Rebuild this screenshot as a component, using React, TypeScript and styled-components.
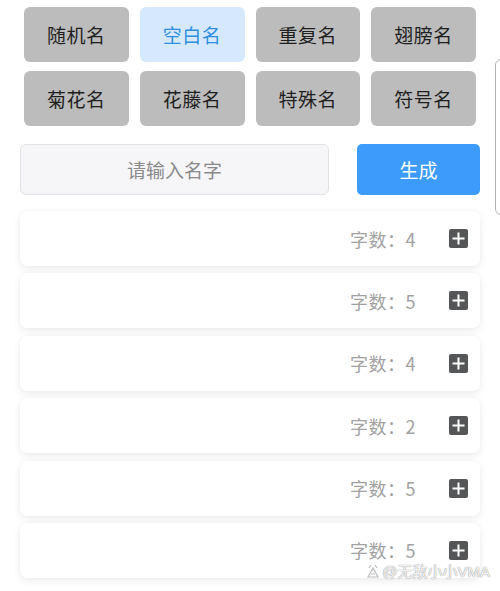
import React from "react";
import styled, { createGlobalStyle } from "styled-components";

const GlobalStyle = createGlobalStyle`
  html, body {
    margin: 0;
    padding: 0;
    background: #ffffff;
    overflow: hidden;
    font-family: "Noto Sans CJK SC", "Noto Sans", sans-serif;
  }
`;

const TYPES = ["随机名", "空白名", "重复名", "翅膀名", "菊花名", "花藤名", "特殊名", "符号名"];
const ACTIVE = "空白名";
const COUNTS = [4, 5, 4, 2, 5, 5];

const App = () => {
  return (
    <Page>
      <GlobalStyle />
      <Main>
        <TypeGrid>
          {TYPES.map((t) => (
            <TypeButton key={t} active={t === ACTIVE}>
              {t}
            </TypeButton>
          ))}
        </TypeGrid>
        <InputRow>
          <NameInput placeholder="请输入名字" />
          <GenerateButton>生成</GenerateButton>
        </InputRow>
        <CardList>
          {COUNTS.map((n, i) => (
            <Card key={i}>
              <Count>字数：{n}</Count>
              <PlusIcon />
            </Card>
          ))}
        </CardList>
      </Main>
      <SidePeek />
      <Watermark>
        <WmIcon />@无敌小小VMA
      </Watermark>
    </Page>
  );
};

const PlusIcon = () => (
  <svg width="19" height="19" viewBox="0 0 19 19">
    <rect x="0" y="0" width="19" height="19" rx="2" fill="#555657" />
    <path d="M9.5 4.5v10M4.5 9.5h10" stroke="#fff" strokeWidth="2" strokeLinecap="square" />
  </svg>
);

const WmIcon = () => (
  <svg width="14" height="14" viewBox="0 0 14 14" style={{ marginRight: 2 }}>
    <path
      d="M3 4 L5 1 M11 4 L9 1 M2 13 L7 4 L12 13 Z M5 10 h4"
      stroke="#bdbdbd"
      strokeWidth="1.2"
      fill="none"
    />
  </svg>
);

export default App;

const Page = styled.div`
  position: relative;
  display: flex;
  width: 500px;
  height: 591px;
  overflow: hidden;
  background: #ffffff;
`;

const Main = styled.div`
  flex: 0 0 460px;
  margin-left: 20px;
  padding-top: 7px;
  display: flex;
  flex-direction: column;
`;

const TypeGrid = styled.div`
  display: grid;
  grid-template-columns: repeat(4, 1fr);
  column-gap: 11px;
  row-gap: 9px;
  padding: 0 4px;
`;

const TypeButton = styled.div<{ active?: boolean }>`
  height: 55px;
  border-radius: 6px;
  display: flex;
  align-items: center;
  justify-content: center;
  font-size: 19px;
  letter-spacing: 0.5px;
  background: ${({ active }) => (active ? "#d6e9fc" : "#bcbcbc")};
  color: ${({ active }) => (active ? "#2e8fe0" : "#1f1f1f")};
`;

const InputRow = styled.div`
  display: flex;
  align-items: stretch;
  gap: 28px;
  margin-top: 18px;
  height: 51px;
`;

const NameInput = styled.input`
  flex: 0 0 309px;
  box-sizing: border-box;
  border: 1px solid #e2e2e6;
  border-radius: 6px;
  background: #f6f6f9;
  font-family: "Noto Sans CJK SC", "Noto Sans", sans-serif;
  font-size: 19px;
  text-align: center;
  color: #333;
  outline: none;
  &::placeholder {
    color: #8a8a8a;
  }
`;

const GenerateButton = styled.div`
  flex: 1;
  border-radius: 5px;
  background: #3d9bfc;
  color: #ffffff;
  font-size: 19px;
  display: flex;
  align-items: center;
  justify-content: center;
`;

const CardList = styled.div`
  display: flex;
  flex-direction: column;
  gap: 7.4px;
  margin-top: 16px;
`;

const Card = styled.div`
  height: 55px;
  flex: 0 0 55px;
  border-radius: 7px;
  background: #ffffff;
  box-shadow: 0 3px 8px rgba(0, 0, 0, 0.07), 0 0 4px rgba(0, 0, 0, 0.03);
  display: flex;
  align-items: center;
  justify-content: flex-end;
  padding-right: 12px;
  gap: 33px;
`;

const Count = styled.span`
  font-size: 18px;
  color: #a2a2a2;
  letter-spacing: 0.5px;
`;

const SidePeek = styled.div`
  flex: 0 0 100px;
  margin-left: 15px;
  margin-top: 59px;
  height: 156px;
  border: 1px solid #b4b4b4;
  border-radius: 6px;
  box-sizing: border-box;
`;

const Watermark = styled.div`
  position: absolute;
  right: 10px;
  bottom: 10px;
  display: flex;
  align-items: center;
  font-family: "Liberation Sans", "Noto Sans CJK SC", sans-serif;
  font-size: 15px;
  color: rgba(255, 255, 255, 0.9);
  text-shadow: 0 0 1px #9a9a9a, 0 0 1px #9a9a9a;
`;
